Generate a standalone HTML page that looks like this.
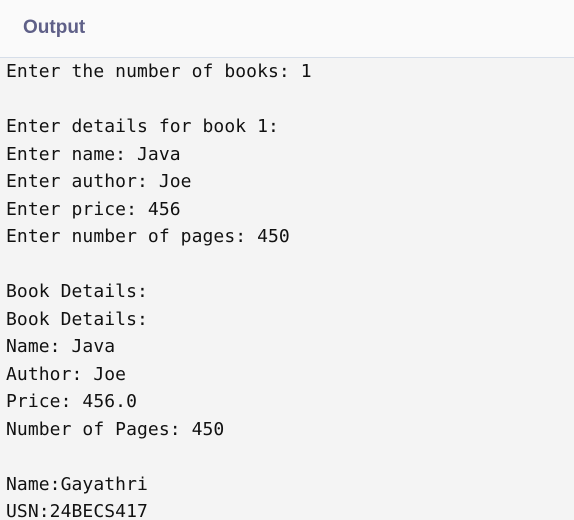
<!DOCTYPE html>
<html><head><style>
html,body{margin:0;padding:0;width:574px;height:520px;overflow:hidden;background:#f4f4f4}
.h{height:57px;background:#fafafa;border-bottom:1px solid #d6dee9;position:relative}
.h span{position:absolute;left:23px;top:17px;font-family:"Liberation Sans",sans-serif;font-weight:bold;font-size:19px;color:#5f6088}
pre{margin:0;padding:0 0 0 6px;font-family:"DejaVu Sans Mono","Liberation Mono",monospace;font-size:18px;letter-spacing:0.08px;line-height:27.5px;color:#111}
</style></head><body>
<div class="h"><span>Output</span></div>
<pre>Enter the number of books: 1

Enter details for book 1:
Enter name: Java
Enter author: Joe
Enter price: 456
Enter number of pages: 450

Book Details:
Book Details:
Name: Java
Author: Joe
Price: 456.0
Number of Pages: 450

Name:Gayathri
USN:24BECS417</pre>
</body></html>
